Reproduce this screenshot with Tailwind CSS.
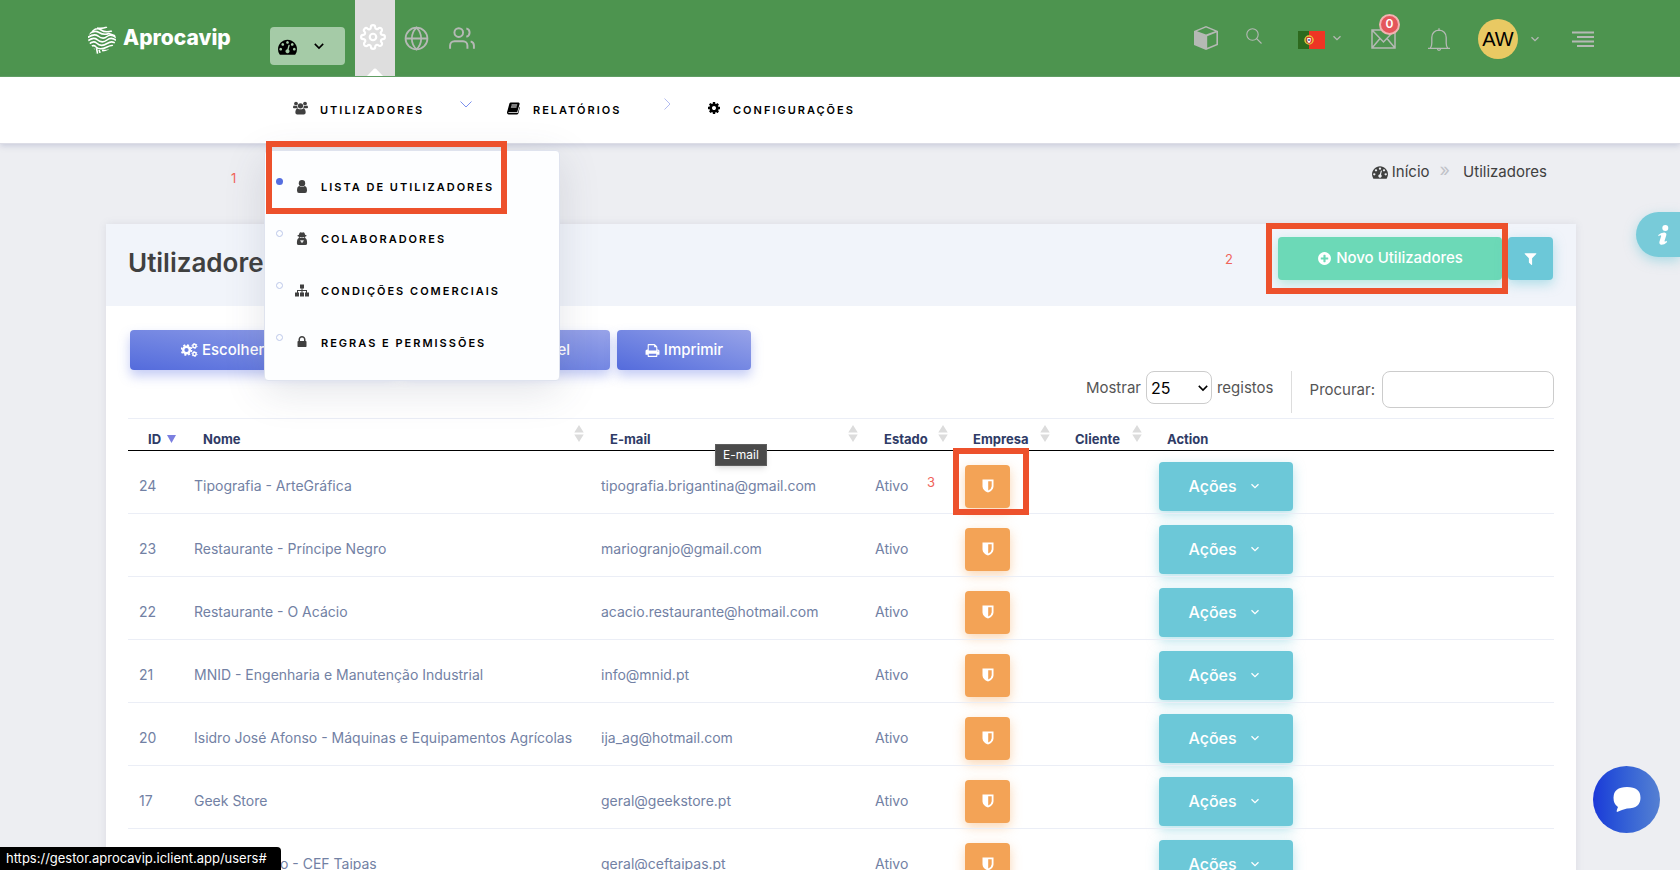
<!DOCTYPE html>
<html lang="pt">
<head>
<meta charset="utf-8">
<title>Aprocavip - Utilizadores</title>
<script src="https://cdn.jsdelivr.net/npm/@tailwindcss/browser@4"></script>
</head>
<body class="relative h-screen overflow-hidden bg-[#edeef2] font-['Inter','Liberation_Sans',sans-serif] text-sm text-[#404040]">

<svg class="hidden" xmlns="http://www.w3.org/2000/svg">
  <symbol id="dash" viewBox="0 0 1792 1792"><path fill-rule="evenodd" d="M384 1152q0-53-37.5-90.5T256 1024t-90.5 37.5T128 1152t37.500 90.500T256 1280t90.500-37.500T384 1152zm192-448q0-53-37.500-90.500T448 576t-90.500 37.500T320 704t37.500 90.500T448 832t90.500-37.500T576 704zm428 481l101-382q6-26-7.500-48.500T1059 725t-48 6.500-30 39.500l-101 382q-60 5-107 43.500t-63 98.500q-20 77 20 146t117 89 146-20 89-117q16-60-6-117t-72-91zm660-33q0-53-37.500-90.500T1536 1024t-90.500 37.500T1408 1152t37.500 90.500T1536 1280t90.500-37.500T1664 1152zm-640-640q0-53-37.500-90.500T896 384t-90.500 37.500T768 512t37.500 90.500T896 640t90.500-37.500T1024 512zm448 192q0-53-37.500-90.500T1344 576t-90.500 37.500T1216 704t37.500 90.500T1344 832t90.500-37.500T1472 704zm320 448q0 261-141 483-19 29-54 29H195q-35 0-54-29Q0 1414 0 1152q0-182 71-348t191-286 286-191 348-71 348 71 286 191 191 286 71 348z"/></symbol>
  <symbol id="cog" viewBox="0 0 1792 1792"><path d="M1152 896q0-106-75-181t-181-75-181 75-75 181 75 181 181 75 181-75 75-181zm512-109v222q0 12-8 23t-20 13l-185 28q-19 54-39 91 35 50 107 138 10 12 10 25t-9 23q-27 37-99 108t-94 71q-12 0-26-9l-138-108q-44 23-91 38-16 136-29 186-7 28-36 28h-222q-14 0-24.500-8.500t-11.500-21.500l-28-184q-49-16-90-37l-141 107q-10 9-25 9-14 0-25-11-126-114-165-168-7-10-7-23 0-12 8-23 15-21 51-66.500t54-70.500q-27-50-41-99l-183-27q-13-2-21-12.500t-8-23.500v-222q0-12 8-23t19-13l186-28q14-46 39-92-40-57-107-138-10-12-10-24 0-10 9-23 26-36 98.500-107.500t94.500-71.500q13 0 26 10l138 107q44-23 91-38 16-136 29-186 7-28 36-28h222q14 0 24.500 8.500t11.500 21.500l28 184q49 16 90 37l142-107q9-9 24-9 13 0 25 10 129 119 165 170 7 8 7 22 0 12-8 23-15 21-51 66.500t-54 70.500q26 50 41 98l183 28q13 2 21 12.500t8 23.500z"/></symbol>
  <symbol id="plus" viewBox="0 0 1792 1792"><path d="M1344 960v-128q0-26-19-45t-45-19h-256v-256q0-26-19-45t-45-19h-128q-26 0-45 19t-19 45v256h-256q-26 0-45 19t-19 45v128q0 26 19 45t45 19h256v256q0 26 19 45t45 19h128q26 0 45-19t19-45v-256h256q26 0 45-19t19-45zm320-64q0 209-103 385.500t-279.500 279.500-385.500 103-385.500-103-279.500-279.500-103-385.500 103-385.500 279.500-279.500 385.500-103 385.500 103 279.500 279.500 103 385.500z"/></symbol>
  <symbol id="filter" viewBox="0 0 1792 1792"><path d="M1595 295q17 41-14 70l-493 493v742q0 42-39 59-13 5-25 5-27 0-45-19l-256-256q-19-19-19-45v-486l-493-493q-31-29-14-70 17-39 59-39h1280q42 0 59 39z"/></symbol>
  <symbol id="print" viewBox="0 0 1792 1792"><path d="M448 1536h896v-256h-896v256zm0-640h896v-384h-160q-40 0-68-28t-28-68v-160h-640v640zm1152 64q0-26-19-45t-45-19-45 19-19 45 19 45 45 19 45-19 19-45zm128 0v416q0 13-9.500 22.500t-22.500 9.500h-224v160q0 40-28 68t-68 28h-960q-40 0-68-28t-28-68v-160h-224q-13 0-22.500-9.500t-9.500-22.500v-416q0-79 56.500-135.500t135.500-56.500h64v-544q0-40 28-68t68-28h672q40 0 88 20t76 48l152 152q28 28 48 76t20 88v256h64q79 0 135.500 56.500t56.500 135.500z"/></symbol>
  <symbol id="lock" viewBox="0 0 1792 1792"><path d="M640 768h512v-192q0-106-75-181t-181-75-181 75-75 181v192zm832 96v576q0 40-28 68t-68 28h-960q-40 0-68-28t-28-68v-576q0-40 28-68t68-28h32v-192q0-184 132-316t316-132 316 132 132 316v192h32q40 0 68 28t28 68z"/></symbol>
  <symbol id="group" viewBox="0 0 16 14"><circle cx="3.200" cy="2.300" r="2"/><circle cx="12.800" cy="2.300" r="2"/><circle cx="8" cy="4.700" r="2.800"/><path d="M0 6.800Q0 4.200 1.300 4.400Q3 5.400 4.500 4.600Q4.500 6.500 5.300 7.300H1Q0 7.300 0 6.800zM16 6.800Q16 4.200 14.700 4.400Q13 5.400 11.500 4.600Q11.500 6.500 10.700 7.300H15Q16 7.300 16 6.800zM2.500 11.800Q2.500 7.600 5 7.400Q8 9.400 11 7.400Q13.500 7.600 13.500 11.800Q13.500 14 11.500 14H4.500Q2.500 14 2.500 11.800z"/></symbol>
  <symbol id="user" viewBox="0 0 12 13"><circle cx="6" cy="3.200" r="3.200"/><path d="M1 10.500Q1 6.200 3.300 5.900Q6 8 8.700 5.900Q11 6.200 11 10.500Q11 13 9 13H3Q1 13 1 10.500z"/></symbol>
  <symbol id="secret" viewBox="0 0 12 14"><path fill-rule="evenodd" d="M4 .3Q6 1 8 .3Q9 1 9.300 3Q11 3.500 11 4T9.500 4.900L9.300 6.500Q11.500 7 11.500 12Q11.500 14 9.500 14H2.500Q.5 14 .5 12Q.5 7 2.700 6.500L2.500 4.900Q1 4.600 1 4T2.700 3Q3 1 4 .3zM3.500 5.300V6Q4.500 6.500 5.500 5.800H6.500Q7.500 6.500 8.500 6V5.300zM4.200 8.500L5.200 12L6 10L6.800 12L7.800 8.500L6 9.200z"/></symbol>
  <symbol id="sitemap" viewBox="0 0 14 12"><path d="M5 0H9V4H7.500V5.500H12V8H14V12H10V8H11V6.500H7.500V8H9V12H5V8H6.500V6.500H3V8H4V12H0V8H2V5.500H6.500V4H5z"/></symbol>
  <symbol id="book" viewBox="0 0 14 13"><path fill-rule="evenodd" d="M4.200 0H12.500Q14 .5 13.500 2L11.200 9.700Q10.900 10.600 10 10.600H2Q1.300 10.800 1.400 11.400H10.500Q11.500 11.400 11.800 10.500L13.500 4.500L14 5L12.200 11.800Q11.900 13 10.500 13H1.800Q.2 13 0 11.200Q0 10 .5 9L2.600 1.200Q3 0 4.200 0zM5 2.300L4.700 3.200H10.800L11.100 2.300zM4.400 4.400L4.100 5.300H10.200L10.500 4.400z"/></symbol>
  <symbol id="cogs" viewBox="0 0 17 14"><g fill="none" stroke="currentColor"><circle cx="5.500" cy="7" r="3.300" stroke-width="2.400"/><circle cx="5.500" cy="7" r="5" stroke-width="1.700" stroke-dasharray="2 1.930"/><circle cx="13.500" cy="3" r="1.700" stroke-width="1.500"/><circle cx="13.500" cy="3" r="2.600" stroke-dasharray="1.200 1.522"/><circle cx="13.500" cy="11" r="1.700" stroke-width="1.500"/><circle cx="13.500" cy="11" r="2.600" stroke-dasharray="1.200 1.522"/></g></symbol>
  <symbol id="shield" viewBox="0 0 12 14"><path fill-rule="evenodd" d="M.5.500H11.500V7.500Q11.200 11.500 6 13.500Q.8 11.500 .5 7.500zM6.200 2.300V11.500Q9.500 10 9.700 7.200V2.300z"/></symbol>
  <symbol id="down" viewBox="0 0 10 10"><path d="M1.500 3.200L5 6.700L8.500 3.200" fill="none" stroke="currentColor" stroke-width="1.300"/></symbol>
  <symbol id="sort" viewBox="0 0 10 18"><path d="M5 0L10 8H0zM5 18L10 10H0z"/></symbol>
</svg>

<header class="flex h-[77px] items-center border-b border-[#5fa160] bg-[#4d944f] pl-[88px] pr-[86px] text-[#b5b9b5]">
  <a href="#" class="flex w-[182px] items-center gap-[7px] text-[21px] font-extrabold leading-8 text-white">
    <svg class="mt-1 size-7" viewBox="0 0 28 28" fill="none" stroke="#fff" stroke-width="1.600"><clipPath id="blob"><path d="M15 0Q20 0 22 3Q28 7 28 14Q26 20 20 24Q12 27 8 28Q7 23 4 20Q-1 16 0 10Q3 5 7 2Q11 0 15 0z"/></clipPath><g clip-path="url(#blob)"><path d="M9 2Q14 3 19 1M4 5Q9 1 13 4T24 5M0 8.500Q6 3.500 11 6.500T21 7.500L28 10M-1 12Q6 7 10 10Q15 14 19 10.500T30 13M-1 15.500Q5 10.500 9 13.500Q14 18 19 14T30 16M0 19Q5 14 8.500 17Q13 21.500 19 17.500T29 19M2 21.500Q6 18 8 21Q12 24.500 19 21T27 22M5.500 22.500L7 30M8.500 22L10 30M11 24L13 29M14 24.500Q18 25 21 24"/></g></svg>
    Aprocavip
  </a>
  <button class="mt-4 flex h-[38px] w-[75px] items-center gap-4 rounded bg-[#a5cba7] pl-2 text-black" aria-label="Painel"><svg class="size-[19px] fill-current"><use href="#dash"/></svg><svg class="size-3"><use href="#down"/></svg></button>
  <nav class="flex items-center self-stretch pl-[10px]">
    <button class="flex w-10 flex-col items-center justify-end self-stretch bg-[#dedede] text-white" aria-label="Gestão">
      <svg class="mb-[18px] mr-1 size-[26px]" viewBox="0 0 24 24" fill="none" stroke="currentColor" stroke-width="2"><circle cx="12" cy="12" r="3"/><path d="M19.400 15a1.650 1.650 0 0 0 .33 1.820l.06.06a2 2 0 1 1-2.830 2.830l-.06-.06a1.650 1.650 0 0 0-2.820 1.170V21a2 2 0 0 1-4 0v-.09A1.650 1.650 0 0 0 9 19.400a1.650 1.650 0 0 0-1.820.33l-.06.06a2 2 0 1 1-2.830-2.830l.06-.06A1.650 1.650 0 0 0 3.090 14H3a2 2 0 0 1 0-4h.09A1.650 1.650 0 0 0 4.600 9a1.650 1.650 0 0 0-.33-1.820l-.06-.06a2 2 0 1 1 2.830-2.830l.06.06A1.650 1.650 0 0 0 10 3.090V3a2 2 0 0 1 4 0v.09a1.650 1.650 0 0 0 2.820 1.170l.06-.06a2 2 0 1 1 2.830 2.830l-.06.06A1.650 1.650 0 0 0 20.910 10H21a2 2 0 0 1 0 4h-.09a1.650 1.650 0 0 0-1.510 1z"/></svg>
      <svg class="h-2 w-4" viewBox="0 0 16 8"><path d="M0 8L7 .8Q8 0 9 .8L16 8z" fill="#fff"/></svg>
    </button>
    <a href="#" class="ml-[9px]" aria-label="Site"><svg class="size-[25px]" viewBox="0 0 24 24" fill="none" stroke="currentColor" stroke-width="1.700"><circle cx="12" cy="12" r="10.500"/><path d="M1.500 12h21M12 1.500c3 3 4.500 6.500 4.500 10.500s-1.500 7.500-4.500 10.500c-3-3-4.500-6.500-4.500-10.500S9 4.500 12 1.500z"/></svg></a>
    <a href="#" class="ml-5" aria-label="Clientes"><svg class="size-[26px]" viewBox="0 0 24 24" fill="none" stroke="currentColor" stroke-width="1.800"><path d="M17 22v-3a4 4 0 0 0-4-4H5a4 4 0 0 0-4 4v3M23 22v-3a4 4 0 0 0-3-3.870M16 3.130a4 4 0 0 1 0 7.750"/><circle cx="9" cy="7" r="4"/></svg></a>
  </nav>
  <div class="ml-auto flex items-center">
    <button aria-label="Produtos"><svg class="size-6" viewBox="0 0 24 24" fill="currentColor"><path fill-rule="evenodd" d="M12 0L24 5V19L12 24L0 19V5zM3 5.200L12 8.600L21 5.200L12 1.600zM13.200 10.200V21.800L22.400 17.900V6.600z"/></svg></button>
    <button class="-mt-1 ml-7" aria-label="Pesquisar"><svg class="size-4" viewBox="0 0 16 16" fill="none" stroke="currentColor" stroke-width="1.100"><circle cx="6.500" cy="6.500" r="5.700"/><path d="M10.500 10.500L15.500 15.500"/></svg></button>
    <button class="ml-9 mt-1 flex items-center gap-[7px]" aria-label="Idioma"><svg class="h-[18px] w-[27px]" viewBox="0 0 27 18"><path fill="#2d6a1e" d="M0 0h11v18H0z"/><path fill="#ee3524" d="M11 0h16v18H11z"/><circle cx="11" cy="9" r="4" fill="none" stroke="#e5c53c" stroke-width="1.500"/><path d="M8.800 6.500h4.400v3.500q-.2 2-2.200 2.500q-2-.5-2.200-2.500z" fill="#fff" stroke="#d8342c"/><circle cx="11" cy="9" r="1" fill="#3556a0"/></svg><svg class="-mt-1 size-[10px]"><use href="#down"/></svg></button>
    <button class="relative ml-[29px] mt-px" aria-label="Mensagens"><svg class="h-5 w-[25px]" viewBox="0 0 25 20" fill="none" stroke="currentColor" stroke-width="1.500"><path d="M1 1H24V19H1zM1 1L12.500 13L24 1M1 19L9 9.500M24 19L16 9.500"/></svg><span class="absolute -top-[15px] left-2 flex size-[21px] items-center justify-center rounded-full border-2 border-[#f3b3b2] bg-[#e4565b] text-xs font-semibold text-white">0</span></button>
    <button class="ml-8 mt-0.5" aria-label="Notificações"><svg class="h-[23px] w-[22px]" viewBox="0 0 22 23" fill="none" stroke="currentColor" stroke-width="1.300"><path d="M0 20.300H22M2.300 20Q3.800 18.500 3.800 15V9.500Q4.200 2.700 11 2.200Q17.800 2.700 18.200 9.500V15Q18.200 18.500 19.700 20M11 2V.300M9.300 20.500Q9.500 22.300 11 22.300T12.700 20.500"/></svg></button>
    <button class="ml-7 mt-0.5 flex items-center gap-3" aria-label="Conta"><span class="flex size-10 items-center justify-center rounded-full bg-[#e9c963] font-['Liberation_Sans',sans-serif] text-xl text-black">AW</span><svg class="size-[10px]"><use href="#down"/></svg></button>
    <button class="ml-8 mt-0.5" aria-label="Menu"><svg class="h-[17px] w-[22px]" viewBox="0 0 22 17" fill="currentColor"><path d="M0 .500h22v2H0zM5 5h17v2H5zM0 9.500h22v2H0zM5 14h17v2H5z"/></svg></button>
  </div>
</header>

<nav class="flex h-[67px] items-center border-b border-[#dcdde6] bg-white pl-[293px] text-[11px] font-semibold leading-4 tracking-[2px] text-black shadow-[0_2px_6px_rgba(120,125,170,0.3)]">
  <a href="#" class="flex w-[167px] items-center gap-3"><svg class="-mt-1 h-[14px] w-[15px] fill-[#404040]"><use href="#group"/></svg>UTILIZADORES</a>
  <svg class="-mt-3 h-[9px] w-3" viewBox="0 0 12 9" fill="none" stroke="#7b90ee"><path d="M.500 1.500L6 7L11.500 1.500"/></svg>
  <a href="#" class="ml-[35px] flex w-[156px] items-center gap-[13px]"><svg class="-mt-1 h-[13px] w-[13px] fill-black"><use href="#book"/></svg>RELATÓRIOS</a>
  <svg class="-mt-3 h-3 w-2" viewBox="0 0 8 12" fill="none" stroke="#b3bcf0"><path d="M1.500 .500L7 6L1.500 11.500"/></svg>
  <a href="#" class="ml-9 flex items-center gap-3"><svg class="-mt-1 size-[14px] fill-black"><use href="#cog"/></svg>CONFIGURAÇÕES</a>
</nav>

<div class="flex h-[80px] items-start justify-end pr-[133px] pt-[18px] text-[15px] leading-5">
  <a href="#" class="flex items-center gap-1"><svg class="size-4 fill-[#404040]"><use href="#dash"/></svg>Início</a>
  <span class="ml-[10px] mr-[13px] text-lg leading-4 text-[#c0c2c8]">»</span>
  <span>Utilizadores</span>
</div>

<main class="ml-[106px] mr-[104px] min-h-screen bg-white shadow-[0_0_8px_rgba(100,105,130,0.12)]">
  <div class="flex h-[82px] items-center justify-between bg-[#f1f4fa] pl-[22px] pr-[23px]">
    <h1 class="-mt-1 text-[26px] font-semibold leading-8">Utilizadores</h1>
    <div class="-mt-3.5 flex gap-[6px] text-[15px] font-medium text-white">
      <button class="flex h-[43px] w-[224px] items-center justify-center gap-1 rounded bg-[#6cd9b7] shadow-[0_4px_12px_rgba(108,217,183,0.45)]"><svg class="size-[15px] fill-white"><use href="#plus"/></svg>Novo Utilizadores</button>
      <button class="flex h-[43px] w-[45px] items-center justify-center rounded bg-[#6cc8d8] shadow-[0_4px_12px_rgba(108,200,216,0.5)]" aria-label="Filtrar"><svg class="size-[15px] fill-white"><use href="#filter"/></svg></button>
    </div>
  </div>

  <div class="px-[22px] pt-6">
    <div class="flex gap-[7px] pl-0.5 text-[15px] font-medium text-white">
      <button class="flex h-10 w-[266px] items-center gap-1 whitespace-nowrap rounded bg-linear-to-tr from-[#546bdc] to-[#98a3e8] pl-[51px] shadow-[0_6px_12px_rgba(85,108,225,0.35)]"><svg class="h-[14px] w-[17px] fill-white"><use href="#cogs"/></svg>Escolher Colunas</button>
      <button class="flex h-10 w-[207px] items-center justify-end rounded bg-linear-to-tr from-[#546bdc] to-[#98a3e8] pr-10 shadow-[0_6px_12px_rgba(85,108,225,0.35)]">Excel</button>
      <button class="flex h-10 w-[134px] items-center justify-center gap-1 rounded bg-linear-to-tr from-[#546bdc] to-[#98a3e8] shadow-[0_6px_12px_rgba(85,108,225,0.35)]"><svg class="size-[15px] fill-white"><use href="#print"/></svg>Imprimir</button>
    </div>
    <div class="flex h-12 items-start justify-end pt-px text-[15px] text-[#555]">
      <label class="flex h-[33px] items-center gap-[5px]" for="len">Mostrar
        <span class="relative flex"><select id="len" class="h-[33px] w-[66px] appearance-none rounded-lg border border-[#ccc] bg-white pl-1 text-base text-black"><option>25</option></select><svg class="pointer-events-none absolute right-[3px] top-[11px] size-3 text-black"><use href="#down"/></svg></span>
        registos</label>
      <span class="ml-[17px] mr-[18px] h-[42px] w-px bg-[#ddd]"></span>
      <label class="flex h-[37px] items-center" for="q">Procurar:</label>
      <input id="q" type="search" class="ml-[7px] h-[37px] w-[172px] rounded-lg border border-[#ccc] bg-white px-2">
    </div>

    <table class="w-full table-fixed border-collapse text-left text-[#7281a4]">
      <colgroup><col class="w-[56px]"><col class="w-[407px]"><col class="w-[274px]"><col class="w-[90px]"><col class="w-[102px]"><col class="w-[92px]"><col></colgroup>
      <thead>
        <tr class="h-8 border-b border-t border-b-black border-t-[#ebeef6] text-[13px] font-bold leading-4 text-[#2f3b66]">
          <th class="pl-5 pt-2"><span class="flex items-center gap-1.5">ID<svg class="h-2 w-[9px]" viewBox="0 0 9 8"><path d="M0 0H9L4.500 8z" fill="#7b7fe0"/></svg></span></th>
          <th class="pl-[19px] pr-[7px] pt-2"><span class="flex justify-between">Nome<svg class="-mt-1.5 h-[17px] w-[10px] fill-[#dcdcdc]"><use href="#sort"/></svg></span></th>
          <th class="pl-[19px] pr-[7px] pt-2"><span class="flex justify-between">E-mail<svg class="-mt-1.5 h-[17px] w-[10px] fill-[#dcdcdc]"><use href="#sort"/></svg></span></th>
          <th class="pl-[19px] pr-[7px] pt-2"><span class="flex justify-between">Estado<svg class="-mt-1.5 h-[17px] w-[10px] fill-[#dcdcdc]"><use href="#sort"/></svg></span></th>
          <th class="pl-[18px] pr-[7px] pt-2"><span class="flex justify-between">Empresa<svg class="-mt-1.5 h-[17px] w-[10px] fill-[#dcdcdc]"><use href="#sort"/></svg></span></th>
          <th class="pl-[18px] pr-[7px] pt-2"><span class="flex justify-between">Cliente<svg class="-mt-1.5 h-[17px] w-[10px] fill-[#dcdcdc]"><use href="#sort"/></svg></span></th>
          <th class="pl-[18px] pt-2">Action</th>
        </tr>
      </thead>
      <tbody id="rows"></tbody>
    </table>
  </div>
</main>

<template id="row">
  <tr class="h-[63px] border-b border-[#ebeef6]">
    <td class="pl-[11px] pt-2"></td><td class="whitespace-nowrap pl-[10px] pt-2"></td><td class="pl-[10px] pt-2"></td><td class="pl-[10px] pt-2">Ativo</td>
    <td class="pl-[10px] pt-2"><button class="flex h-[43px] w-[45px] items-center justify-center rounded bg-[#f3a356] shadow-[0_4px_12px_rgba(243,163,86,0.45)]" aria-label="Empresa"><svg class="h-[14px] w-3 fill-white"><use href="#shield"/></svg></button></td>
    <td></td>
    <td class="pl-[10px] pt-2"><button class="flex h-[49px] w-[134px] items-center justify-center gap-[13px] rounded bg-[#6cc8d8] pr-1 text-base font-medium text-white shadow-[0_4px_12px_rgba(108,200,216,0.5)]">Ações<svg class="size-[10px]"><use href="#down"/></svg></button></td>
  </tr>
</template>

<div class="absolute left-[264px] top-[150px] flex w-[296px] flex-col rounded border border-[#dfe3ee] bg-[#fdfeff] pb-[10px] pt-[11px] text-[11px] font-semibold tracking-[2px] text-black shadow-[0_10px_40px_rgba(70,75,100,0.15)]">
  <a href="#" class="flex h-[52px] items-center pl-[11px]"><span class="-mt-3.5 size-[7px] rounded-full bg-[#556ee0]"></span><svg class="-mt-1 ml-3 mr-3 h-[13px] w-[14px] fill-[#404040]"><use href="#user"/></svg>LISTA DE UTILIZADORES</a>
  <a href="#" class="flex h-[52px] items-center pl-[11px]"><span class="-mt-3.5 size-[7px] rounded-full border border-[#bcc8ea]"></span><svg class="-mt-1 ml-3 mr-3 h-[13px] w-[14px] fill-[#404040]"><use href="#secret"/></svg>COLABORADORES</a>
  <a href="#" class="flex h-[52px] items-center pl-[11px]"><span class="-mt-3.5 size-[7px] rounded-full border border-[#bcc8ea]"></span><svg class="-mt-1 ml-3 mr-3 h-[13px] w-[14px] fill-[#404040]"><use href="#sitemap"/></svg>CONDIÇÕES COMERCIAIS</a>
  <a href="#" class="flex h-[52px] items-center pl-[11px]"><span class="-mt-3.5 size-[7px] rounded-full border border-[#bcc8ea]"></span><svg class="-mt-1 ml-3 mr-3 h-[14px] w-[14px] fill-[#404040]"><use href="#lock"/></svg>REGRAS E PERMISSÕES</a>
</div>

<div role="tooltip" class="absolute left-[715px] top-[444px] flex h-[22px] w-[52px] items-center justify-center border border-[#5e5e5e] bg-[#4a4a4a] text-xs text-white shadow-md">E-mail</div>

<!-- numbered step markers -->
<div class="pointer-events-none absolute left-[266px] top-[141px] h-[73px] w-[241px] border-[6px] border-[#ed512c]"></div>
<div class="pointer-events-none absolute right-[172px] top-[223px] h-[71px] w-[242px] border-[6px] border-[#ed512c]"></div>
<div class="pointer-events-none absolute left-[953px] top-[448px] h-[67px] w-[76px] border-[6px] border-[#ed512c]"></div>
<span class="absolute left-[231px] top-[168px] text-[13px] leading-5 text-[#f0645a]">1</span>
<span class="absolute right-[447px] top-[249px] text-[13px] leading-5 text-[#f0645a]">2</span>
<span class="absolute left-[927px] top-[472px] text-[13px] leading-5 text-[#f0645a]">3</span>

<button class="fixed right-0 top-[212px] flex h-[45px] w-11 items-center rounded-l-full bg-[#78cbd9] pl-[22px] shadow-[0_4px_12px_rgba(108,200,216,0.5)]" aria-label="Informação"><svg class="h-5 w-[11px] fill-white" viewBox="0 0 11 20"><circle cx="7.300" cy="3" r="3"/><path d="M.300 10Q3 7.300 6.500 7.500Q9 8 8.200 10.500L6.500 16Q6.800 17.200 9 15.800L8.700 17.500Q6 20 3 19.700Q.8 19 1.500 16.500L3.200 11Q3 9.600 .500 11.300z"/></svg></button>
<button class="fixed bottom-[37px] right-5 flex size-[67px] items-center justify-center rounded-full bg-linear-to-r from-[#1c38d8] to-[#5580d2]" aria-label="Chat"><svg class="h-[25px] w-7 fill-white" viewBox="0 0 28 25"><path d="M14 0Q27.500 0 27.500 10.800T14 21.500Q9 22.500 4 25Q3 24.500 5 20Q.500 17.500 .500 10.800Q.500 0 14 0z"/></svg></button>
<div class="fixed bottom-0 left-0 flex h-[23px] w-[281px] items-center rounded-tr bg-black pl-1.5 text-[13px] text-white">https://gestor.aprocavip.iclient.app/users#</div>

<script>
const rows = [
  ["24", "Tipografia - ArteGráfica", "tipografia.brigantina@gmail.com"],
  ["23", "Restaurante - Príncipe Negro", "mariogranjo@gmail.com"],
  ["22", "Restaurante - O Acácio", "acacio.restaurante@hotmail.com"],
  ["21", "MNID - Engenharia e Manutenção Industrial", "info@mnid.pt"],
  ["20", "Isidro José Afonso - Máquinas e Equipamentos Agrícolas", "ija_ag@hotmail.com"],
  ["17", "Geek Store", "geral@geekstore.pt"],
  ["16", "Departamento - CEF Taipas", "geral@ceftaipas.pt"]
];
const body = document.getElementById("rows"), tpl = document.getElementById("row");
for (const r of rows) {
  const tr = tpl.content.cloneNode(true);
  const cells = tr.querySelectorAll("td");
  r.forEach((text, i) => { cells[i].textContent = text; });
  body.append(tr);
}
</script>
</body>
</html>
